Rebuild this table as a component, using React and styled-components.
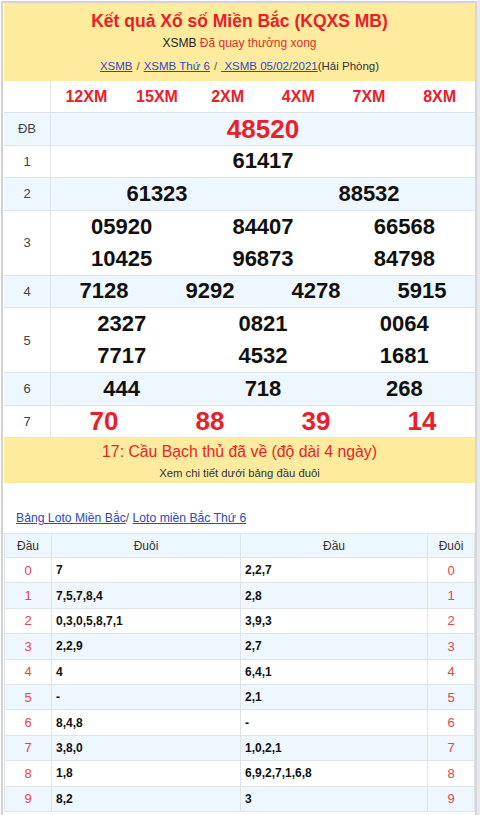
import React from "react";
import styled, { createGlobalStyle } from "styled-components";

const GlobalStyle = createGlobalStyle`
  html, body { margin: 0; padding: 0; background: #fff; }
  body { font-family: Arial, "Liberation Sans", Helvetica, sans-serif; color: #222; }
  * { box-sizing: border-box; }
`;

const RED = "#e8202a";
const BLUE_ROW = "#eef6fe";
const LINE = "#dfe4ea";
const YELLOW = "#ffeb9e";
const LINK = "#2f49c0";

const Page = styled.div`
  padding: 1px 0 0 1px;
  width: 480px;
  border-right: 3px solid #e7e9f1;
`;

const Frame = styled.div`
  border-top: 2px solid #d2d2d2;
  border-left: 2px solid #d2d2d2;
  border-right: 2px solid #d6d6d6;
  padding-left: 1px;
  padding-bottom: 4px;
`;

const Header = styled.div`
  background: ${YELLOW};
  text-align: center;
  padding: 6px 0 5px;
`;

const Title = styled.h1`
  margin: 0;
  font-size: 17.5px;
  line-height: 24px;
  font-weight: bold;
  color: ${RED};
`;

const Sub = styled.div`
  font-size: 12px;
  line-height: 20px;
  color: #222;
`;

const Done = styled.span`
  color: #d9322a;
`;

const Crumbs = styled.div`
  margin-top: 3px;
  font-size: 11.5px;
  line-height: 20px;
  color: #333;
`;

const A = styled.a`
  color: ${LINK};
  text-decoration: underline;
`;

const Sep = styled.span`
  color: #555;
  margin: 0 4px;
`;

const Row = styled.div`
  display: flex;
  height: ${(p) => p.$h}px;
  background: ${(p) => (p.$alt ? BLUE_ROW : "#fff")};
  border-bottom: 1px solid ${LINE};
`;

const Label = styled.div`
  width: 47px;
  flex: none;
  border-right: 1px solid ${LINE};
  display: flex;
  align-items: center;
  justify-content: center;
  font-size: 13px;
  color: #444;
`;

const Nums = styled.div`
  flex: 1;
  display: grid;
  grid-template-columns: repeat(${(p) => p.$cols}, 1fr);
  grid-auto-rows: 1fr;
  align-items: center;
  text-align: center;
`;

const Code = styled.div`
  font-size: 16px;
  font-weight: bold;
  color: ${RED};
`;

const Num = styled.div`
  font-size: ${(p) => (p.$big ? 26 : 22)}px;
  font-weight: bold;
  color: ${(p) => (p.$red ? RED : "#111")};
  line-height: 1;
`;

const Banner = styled.div`
  background: ${YELLOW};
  text-align: center;
  padding: 3px 0 2px;
`;

const BannerTitle = styled.div`
  font-size: 15.8px;
  line-height: 22px;
  color: #e3262b;
  margin-bottom: 2px;
`;

const BannerSub = styled.div`
  font-size: 11.3px;
  line-height: 16px;
  color: #333;
`;

const LotoLinks = styled.div`
  margin-top: 26px;
  padding-left: 12px;
  font-size: 12.2px;
  line-height: 18px;
  color: #555;
`;

const Loto = styled.div`
  margin-top: 6px;
  display: grid;
  grid-template-columns: 47px 189px 187px 1fr;
  grid-template-rows: 24px;
  grid-auto-rows: 25.4px;
  border-top: 1px solid ${LINE};
  border-left: 1px solid ${LINE};
  width: 471px;
`;

const Cell = styled.div`
  border-right: 1px solid ${LINE};
  border-bottom: 1px solid ${LINE};
  background: ${(p) => (p.$alt ? BLUE_ROW : "#fff")};
  display: flex;
  align-items: center;
  justify-content: ${(p) => (p.$left ? "flex-start" : "center")};
  padding-left: ${(p) => (p.$left ? 4 : 0)}px;
  font-size: ${(p) => (p.$head ? 12 : p.$red ? 13 : 12)}px;
  font-weight: ${(p) => (p.$left ? "bold" : "normal")};
  color: ${(p) => (p.$red ? "#e8434b" : p.$head ? "#333" : "#111")};
`;

const codes = ["12XM", "15XM", "2XM", "4XM", "7XM", "8XM"];

const prizes = [
  { label: "ĐB", cols: 1, nums: ["48520"], red: true, big: true, alt: true },
  { label: "1", cols: 1, nums: ["61417"] },
  { label: "2", cols: 2, nums: ["61323", "88532"], alt: true },
  { label: "3", cols: 3, nums: ["05920", "84407", "66568", "10425", "96873", "84798"] },
  { label: "4", cols: 4, nums: ["7128", "9292", "4278", "5915"], alt: true },
  { label: "5", cols: 3, nums: ["2327", "0821", "0064", "7717", "4532", "1681"] },
  { label: "6", cols: 3, nums: ["444", "718", "268"], alt: true },
  { label: "7", cols: 4, nums: ["70", "88", "39", "14"], red: true, big: true },
];

const dau = ["7", "7,5,7,8,4", "0,3,0,5,8,7,1", "2,2,9", "4", "-", "8,4,8", "3,8,0", "1,8", "8,2"];
const duoi = ["2,2,7", "2,8", "3,9,3", "2,7", "6,4,1", "2,1", "-", "1,0,2,1", "6,9,2,7,1,6,8", "3"];

export default function App() {
  return (
    <>
      <GlobalStyle />
      <Page>
        <Frame>
          <Header>
            <Title>Kết quả Xổ số Miền Bắc (KQXS MB)</Title>
            <Sub>
              XSMB <Done>Đã quay thưởng xong</Done>
            </Sub>
            <Crumbs>
              <A href="#">XSMB</A>
              <Sep>/</Sep>
              <A href="#">XSMB Thứ 6</A>
              <Sep>/</Sep>
              <A href="#"> XSMB 05/02/2021</A>(Hải Phòng)
            </Crumbs>
          </Header>

          <Row $h={32}>
            <Label />
            <Nums $cols={6}>
              {codes.map((c) => (
                <Code key={c}>{c}</Code>
              ))}
            </Nums>
          </Row>

          {prizes.map((p) => {
            const lines = Math.ceil(p.nums.length / p.cols);
            return (
              <Row key={p.label} $h={32.5 * lines} $alt={p.alt}>
                <Label>{p.label}</Label>
                <Nums $cols={p.cols}>
                  {p.nums.map((n, i) => (
                    <Num key={i} $red={p.red} $big={p.big}>
                      {n}
                    </Num>
                  ))}
                </Nums>
              </Row>
            );
          })}

          <Banner>
            <BannerTitle>17: Cầu Bạch thủ đã về (độ dài 4 ngày)</BannerTitle>
            <BannerSub>Xem chi tiết dưới bảng đầu đuôi</BannerSub>
          </Banner>

          <LotoLinks>
            <A href="#">Bảng Loto Miền Bắc</A>/ <A href="#">Loto miền Bắc Thứ 6</A>
          </LotoLinks>

          <Loto>
            <Cell $head $alt>Đầu</Cell>
            <Cell $head $alt>Đuôi</Cell>
            <Cell $head $alt>Đầu</Cell>
            <Cell $head $alt>Đuôi</Cell>
            {dau.map((d, i) => (
              <React.Fragment key={i}>
                <Cell $red $alt={i % 2 === 1}>{i}</Cell>
                <Cell $left $alt={i % 2 === 1}>{d}</Cell>
                <Cell $left $alt={i % 2 === 1}>{duoi[i]}</Cell>
                <Cell $red $alt={i % 2 === 1}>{i}</Cell>
              </React.Fragment>
            ))}
          </Loto>
        </Frame>
      </Page>
    </>
  );
}
